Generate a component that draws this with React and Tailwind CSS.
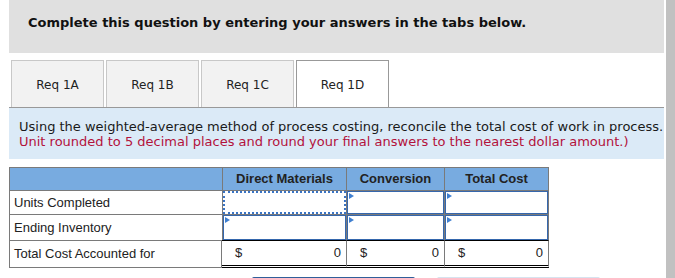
import React from "react";

const tabs = ["Req 1A", "Req 1B", "Req 1C", "Req 1D"];

const Flag = () => (
  <span className="absolute left-[1px] top-[1px] h-0 w-0 border-y-[3px] border-l-[5px] border-y-transparent border-l-[#3f7fd0]" />
);

const InputCell = ({ w, focused }) => (
  <div className={`${w} border-l border-t border-[#7a7a7a] p-0`}>
    {focused ? (
      <div className="relative h-full w-full border-2 border-dotted border-[#3a74c4]" />
    ) : (
      <div className="relative h-full w-full border border-[#3567ad]">
        <Flag />
      </div>
    )}
  </div>
);

export default function App() {
  const valueCols = ["w-[124px]", "w-[98px]", "w-[105px]"];

  return (
    <div className="flex h-[278px] w-[675px] overflow-hidden bg-white">
      <div className="min-w-0 flex-1 pl-[9px] pr-[2px]">
        {/* Header */}
        <div className="h-[53px] bg-[#e0e0e0] pl-[19px] pt-[15px]">
          <p className="whitespace-nowrap font-['DejaVu_Sans',sans-serif] text-[13px] font-bold leading-[15px] text-[#111]">
            Complete this question by entering your answers in the tabs below.
          </p>
        </div>

        {/* Tabs */}
        <div className="mt-[7px] flex h-[48px] gap-[2px] border-b border-[#999] pl-[2px]">
          {tabs.map((t, i) => (
            <div
              key={t}
              className={`flex h-[47px] w-[93px] items-center justify-center border-x border-t pt-[2px] font-['DejaVu_Sans',sans-serif] text-[12px] text-[#222] ${
                i === 3 ? "border-[#999] bg-white" : "border-[#c8c8c8] bg-[#f2f2f2]"
              }`}
            >
              {t}
            </div>
          ))}
        </div>

        {/* Instructions */}
        <div className="h-[51px] overflow-hidden whitespace-nowrap bg-[#dbeaf7] pl-[10px] pt-[11px] font-['DejaVu_Sans',sans-serif] text-[13px] leading-[15px]">
          <p className="text-[#1a1a1a]">
            Using the weighted-average method of process costing, reconcile the total cost of work in process.
          </p>
          <p className="text-[#b3123c]">
            Unit rounded to 5 decimal places and round your final answers to the nearest dollar amount.)
          </p>
        </div>

        {/* Table */}
        <div className="mt-[8px] w-[541px] font-['Liberation_Sans',Arial,sans-serif] text-[13px] text-[#222]">
          <div className="flex h-[23px]">
            <div className="w-[213px] border-l border-t border-[#7a7a7a] bg-[#78abe0]" />
            {["Direct Materials", "Conversion", "Total Cost"].map((h, i) => (
              <div
                key={h}
                className={`${valueCols[i]} flex items-center justify-center border-l border-t border-[#7a7a7a] bg-[#78abe0] font-bold ${
                  i === 2 ? "border-r" : ""
                }`}
              >
                {h}
              </div>
            ))}
          </div>

          {[
            ["Units Completed", "h-[24px]"],
            ["Ending Inventory", "h-[26px]"],
          ].map(([label, h], r) => (
            <div key={label} className={`flex ${h}`}>
              <div className="flex w-[213px] items-center border-l border-t border-[#7a7a7a] pl-[4px]">
                {label}
              </div>
              <InputCell w={valueCols[0]} focused={r === 0} />
              <InputCell w={valueCols[1]} />
              <div className={`${valueCols[2]} border-x border-t border-[#7a7a7a]`}>
                <div className="relative h-full w-full border border-[#3567ad]">
                  <Flag />
                </div>
              </div>
            </div>
          ))}

          <div className="flex h-[28px]">
            <div className="flex w-[213px] items-center border-x border-y border-[#7a7a7a] pl-[4px]">
              Total Cost Accounted for
            </div>
            {valueCols.map((w, i) => (
              <div
                key={w}
                className={`${w} flex items-center justify-between border-b-[3px] border-t border-b-black border-t-black border-double pl-[13px] pr-[5px] ${
                  i > 0 ? "border-l border-l-[#7a7a7a]" : ""
                } ${i === 2 ? "border-r border-r-[#7a7a7a]" : ""}`}
              >
                <span>$</span>
                <span>0</span>
              </div>
            ))}
          </div>
        </div>

        {/* Navigation buttons (cut off) */}
        <div className="mt-[9px] flex gap-[22px] pl-[243px]">
          <div className="h-[30px] w-[163px] rounded-t-[2px] border-t-2 border-[#2f5f9a] bg-[#2f5f9a]" />
          <div className="h-[30px] w-[163px] rounded-t-[2px] border-t-2 border-[#d6e3ef] bg-[#eef3f8]" />
        </div>
      </div>
      <div className="w-[9px] bg-[#c1c1c1]" />
    </div>
  );
}
